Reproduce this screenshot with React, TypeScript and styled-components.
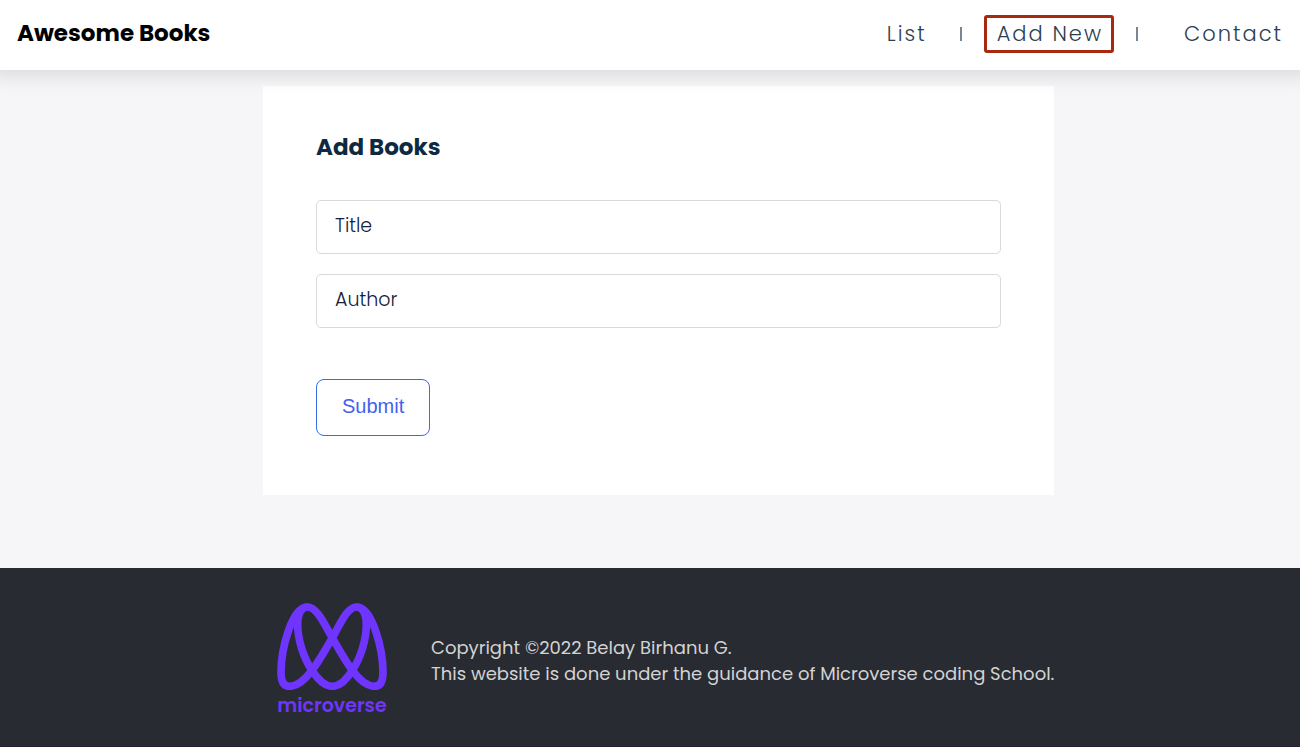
import React, { useState } from 'react';
import styled, { createGlobalStyle } from 'styled-components';

const GlobalStyle = createGlobalStyle`
  * { box-sizing: border-box; }
  body {
    margin: 0;
    background: #f6f6f9;
    font-family: Poppins, Inter, "Liberation Sans", sans-serif;
  }
`;

const Page = styled.div`
  display: flex;
  flex-direction: column;
  min-height: 100vh;
`;

const Header = styled.header`
  position: relative;
  z-index: 1;
  display: flex;
  align-items: center;
  justify-content: space-between;
  height: 70px;
  padding: 0 6px 2px 17px;
  background: #fff;
  box-shadow: 0 -5px 20px 10px rgba(0, 0, 0, 0.12);
`;

const Brand = styled.h1`
  margin: 0;
  padding-bottom: 2px;
  font-size: 23px;
  line-height: 32px;
  font-weight: 700;
  color: #000;
`;

const Nav = styled.nav`
  display: flex;
  align-items: center;
`;

const NavLink = styled.a<{ $active?: boolean }>`
  padding: 0 8px 0 10px;
  border: 3px solid ${(p) => (p.$active ? '#a52a10' : 'transparent')};
  border-radius: 3px;
  font-size: 21px;
  line-height: 32px;
  font-weight: 300;
  letter-spacing: 2px;
  color: #2c3e50;
  text-decoration: none;
  white-space: nowrap;
  &:last-child { margin-left: 11px; }
`;

const Divider = styled.span`
  width: 2px;
  height: 14px;
  margin: 0 22px;
  background: #7a8693;
`;

const Main = styled.main`
  flex: 1;
  padding: 16px 0 73px 17px;
`;

const Card = styled.section`
  max-width: 791px;
  margin: 0 auto;
  padding: 45px 53px 59px;
  background: #fff;
`;

const Heading = styled.h2`
  margin: 0 0 37px;
  font-size: 23px;
  line-height: 32px;
  font-weight: 700;
  color: #0e2a42;
`;

const Form = styled.form`
  display: flex;
  flex-direction: column;
  align-items: flex-start;
  gap: 20px;
`;

const Field = styled.input`
  width: 100%;
  height: 54px;
  padding: 0 18px 4px;
  border: 1px solid #d5dbdb;
  border-radius: 5px;
  background: #fff;
  font-family: inherit;
  font-size: 19px;
  font-weight: 300;
  color: #14213d;
  &::placeholder { color: #14213d; opacity: 1; }
`;

const Submit = styled.button`
  height: 57px;
  margin-top: 31px;
  padding: 0 25px 3px;
  border: 1px solid #3b6be8;
  border-radius: 8px;
  background: #fff;
  font-family: "Liberation Sans", Arial, sans-serif;
  font-size: 20px;
  color: #4361ee;
`;

const Footer = styled.footer`
  padding: 35px 0 28px 17px;
  border-bottom: 1px solid #2a2035;
  background: #282b32;
`;

const FooterContent = styled.div`
  display: flex;
  align-items: center;
  gap: 44px;
  max-width: 791px;
  margin: 0 auto;
  padding-left: 14px;
`;

const Logo = styled.div`
  flex: none;
  display: flex;
  flex-direction: column;
  align-items: center;
  width: 110px;
  color: #6f35ff;
`;

const LogoName = styled.span`
  margin-top: 4px;
  font-size: 19px;
  line-height: 24px;
  font-weight: 600;
`;

const Notice = styled.p`
  margin: 0;
  font-size: 18px;
  line-height: 26px;
  color: #d3d3d3;
  @media (min-width: 820px) {
    white-space: nowrap;
  }
`;

const Mark = () => (
  <svg width="110" height="87" viewBox="51 38 330 261" fill="none" stroke="currentColor" strokeWidth="23" aria-hidden="true">
    <path d="M142 50C94 50 63 180 63 246C63 276 72 288 88 288C112 288 137 266 156 240C180 208 198 175 217 143C239 105 260 50 290 50C338 50 369 180 369 246C369 276 360 288 344 288C320 288 296 266 277 240C253 208 236 175 217 143C195 105 172 50 142 50Z" />
    <path d="M142 50C123 50 113 72 113 102C113 150 132 205 156 240C174 268 193 288 217 288C240 288 260 268 277 240C301 205 319 150 319 102C319 72 309 50 290 50" />
  </svg>
);

export default function App() {
  const [title, setTitle] = useState('');
  const [author, setAuthor] = useState('');
  return (
    <Page>
      <GlobalStyle />
      <Header>
        <Brand>Awesome Books</Brand>
        <Nav>
          <NavLink href="#list">List</NavLink>
          <Divider />
          <NavLink href="#add" $active>Add New</NavLink>
          <Divider />
          <NavLink href="#contact">Contact</NavLink>
        </Nav>
      </Header>
      <Main>
        <Card>
          <Heading>Add Books</Heading>
          <Form onSubmit={(e) => e.preventDefault()}>
            <Field aria-label="Title" placeholder="Title" value={title} onChange={(e) => setTitle(e.target.value)} />
            <Field aria-label="Author" placeholder="Author" value={author} onChange={(e) => setAuthor(e.target.value)} />
            <Submit type="submit">Submit</Submit>
          </Form>
        </Card>
      </Main>
      <Footer>
        <FooterContent>
          <Logo>
            <Mark />
            <LogoName>microverse</LogoName>
          </Logo>
          <Notice>
            Copyright ©2022 Belay Birhanu G.
            <br />
            This website is done under the guidance of Microverse coding School.
          </Notice>
        </FooterContent>
      </Footer>
    </Page>
  );
}
